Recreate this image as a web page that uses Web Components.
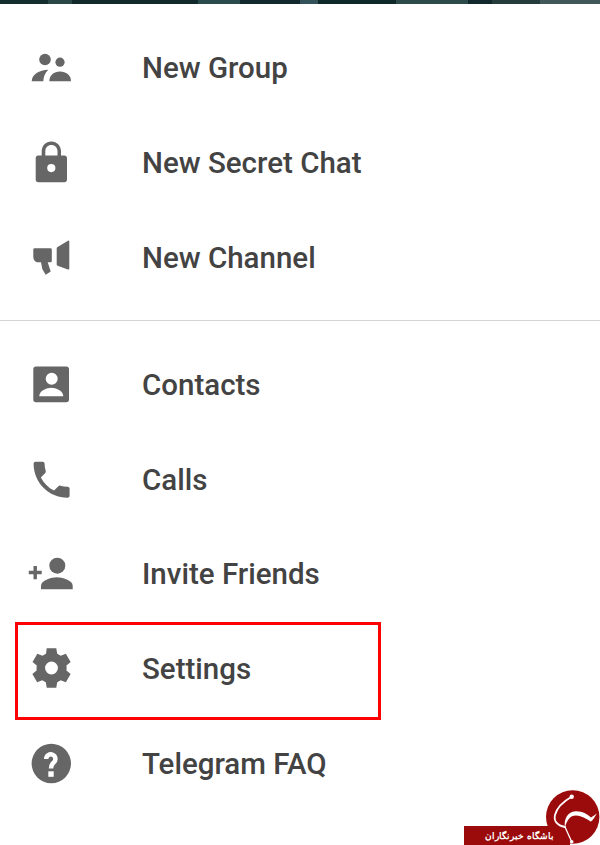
<!DOCTYPE html>
<html><head><meta charset="utf-8"><style>
html,body{margin:0;padding:0;background:#fff}
body{width:600px;height:845px;overflow:hidden;font-family:Roboto,"Liberation Sans",sans-serif}
</style></head><body>
<drawer-app></drawer-app>
<script>
const ICONS={
group:'<circle cx="18" cy="15.500" r="5.800"/><circle cx="33" cy="18.200" r="4.600"/><path d="M4.700 37.200C5 30.500 12 26 21.300 25.800 18 29 16.500 33 16.300 37.200z"/><path d="M22.300 37.200C22.500 31 27 27.500 33 27.500S44 31 44 37.200z"/>',
lock:'<path fill-rule="evenodd" d="M14.700 16.500V12.300C14.700 6.900 18.700 2.500 24.300 2.500S34 6.900 34 12.300v4.200h3.500c1.400 0 2.500 1.100 2.500 2.500v21.700c0 1.400-1.100 2.500-2.500 2.500H11.200c-1.400 0-2.500-1.100-2.500-2.500V19c0-1.400 1.100-2.500 2.500-2.500zm3.600 0h12.200V12.300c0-3.600-2.600-6.200-6.100-6.200s-6.100 2.600-6.100 6.200zM24.300 25a4.100 4.100 0 1 0 0 8.200 4.100 4.100 0 0 0 0-8.200z"/>',
channel:'<path d="M7.500 14.200H23.500a1.300 1.300 0 0 1 1.300 1.300V27a1.300 1.300 0 0 1-1.300 1.300h-2.800l3 9.200-5 3.300-3.400-5.800-1.300-6.700H11C8 28.300 6.300 25.500 6.300 22.500V15.400a1.200 1.200 0 0 1 1.200-1.200z"/><path d="M29.700 14.500c0-.7.300-1.200.9-1.500L41 6.700c.6-.3 1.300 0 1.300.8v27c0 .8-.7 1.200-1.300 1L30.600 31.800c-.6-.2-.9-.7-.9-1.300z"/>',
contact:'<path fill-rule="evenodd" d="M8.800 5.500h30.700c1.400 0 2.500 1.100 2.500 2.500v30.700c0 1.400-1.100 2.500-2.500 2.500H8.800c-1.400 0-2.500-1.100-2.500-2.500V8c0-1.400 1.100-2.500 2.500-2.500zm15.900 6.300a6 6 0 1 0 0 12 6 6 0 0 0 0-12zM12.300 35.200h24c0-5.500-7.500-8.400-12-8.400s-12 2.900-12 8.400z"/>',
call:'<path transform="translate(.6 -.2) scale(2)" d="M6.620 10.790c1.440 2.830 3.760 5.140 6.590 6.590l2.200-2.200c.27-.27.67-.36 1.020-.24 1.120.37 2.330.57 3.570.57.550 0 1 .45 1 1V20c0 .55-.45 1-1 1-9.390 0-17-7.610-17-17 0-.55.45-1 1-1h3.500c.55 0 1 .45 1 1 0 1.250.2 2.450.57 3.570.11.350.03.740-.25 1.020l-2.200 2.200z"/>',
invite:'<circle cx="30.300" cy="15.700" r="8"/><path d="M14 39.300v-3.500c0-5.500 10.500-8.500 15.800-8.500s15.900 3 15.900 8.500v3.500z"/><path d="M6.500 16h3.400v4.800h4.800v3.400H9.900v5H6.500v-5H1.800v-3.400h4.700z"/>',
settings:'<path transform="translate(24.500 23) scale(1.840) translate(-12 -12)" fill-rule="evenodd" d="M9.400 1.300h5.200l.5 3c.7.3 1.300.7 1.900 1.100l2.800-1.100 2.600 4.500-2.300 1.900c.1.400.1.800.1 1.300s0 .9-.1 1.300l2.300 1.900-2.600 4.500-2.800-1.100c-.6.400-1.200.8-1.900 1.100l-.5 3H9.400l-.5-3c-.7-.3-1.300-.7-1.900-1.100l-2.800 1.100-2.600-4.500 2.300-1.900C3.900 13 3.900 12.500 3.900 12s0-.9.100-1.300L1.700 8.800l2.600-4.500L7.100 5.400c.6-.4 1.200-.8 1.900-1.100zM12 8.500a3.500 3.500 0 1 0 0 7 3.500 3.500 0 0 0 0-7z"/>',
faq:'<circle cx="24.300" cy="23.500" r="19.700"/><path d="M19.200 19a4.600 4.600 0 1 1 7.600 3.400c-1.800 1.600-2.800 2.700-2.800 6.200" fill="none" stroke="#fff" stroke-width="4.500"/><rect x="21.300" y="31.300" width="5.400" height="5.500" fill="#fff"/>'
};
class MenuIcon extends HTMLElement{
  connectedCallback(){
    this.attachShadow({mode:'open'}).innerHTML=`<style>:host{display:block;width:48px;height:48px;flex:none}svg{display:block;fill:#666;overflow:visible}</style><svg width="48" height="48" viewBox="0 0 48 48">${ICONS[this.getAttribute('name')]}</svg>`;
  }
}
customElements.define('menu-icon',MenuIcon);
class MenuRow extends HTMLElement{
  connectedCallback(){
    this.attachShadow({mode:'open'}).innerHTML=`<style>:host{display:flex;align-items:center;height:var(--row,95px);padding-left:27px;box-sizing:border-box;color:#434343;font:500 29.5px Roboto,"Liberation Sans",sans-serif}
    .t{margin-left:67px;white-space:nowrap}</style><menu-icon name="${this.getAttribute('icon')}"></menu-icon><span class="t"><slot></slot></span>`;
  }
}
customElements.define('menu-row',MenuRow);
class BrandLogo extends HTMLElement{
  connectedCallback(){
    this.attachShadow({mode:'open'}).innerHTML=`<style>:host{position:absolute;left:464px;top:790px;width:136px;height:55px;display:block}
    .bar{position:absolute;left:0;top:36px;width:106px;height:19px;background:#9c0b0b;color:#fff;font:700 9px "Liberation Sans","Noto Sans",sans-serif;display:flex;align-items:center;justify-content:center;box-sizing:border-box;padding-left:5px}
    svg{position:absolute;left:81px;top:0}</style><div class="bar" dir="rtl">باشگاه خبرنگاران</div>
    <svg width="55" height="55" viewBox="0 0 55 55"><circle cx="27.700" cy="27" r="26.700" fill="#9c0b0b"/><g fill="none" stroke="#fff" stroke-linecap="round"><path d="M26.700 6.700C19 11 12 17 10 25 8.500 31 12 35.500 20 37" stroke-width="1.800"/><path d="M20 37L26.700 51.700" stroke-width="1.300"/></g><path d="M20 37.500C18.500 29 23 21.500 30.500 21.300 37 21 42 24 46 27.500L52 23.500C49 28 47.500 31 45.500 31.500 42 29 37 26 31 25.500 25 25.500 22 30 20 37.500z" fill="#fff"/><circle cx="26.700" cy="6.700" r="2.200" fill="#fff"/><circle cx="26.700" cy="51.700" r="1.800" fill="#fff"/></svg>`;
  }
}
customElements.define('brand-logo',BrandLogo);
class DrawerApp extends HTMLElement{
  connectedCallback(){
    this.attachShadow({mode:'open'}).innerHTML=`<style>:host{display:block;position:relative;width:600px;height:845px;overflow:hidden;background:#fff}
    .top{height:4px;background:linear-gradient(90deg,#122e2f 0 8%,#2a4748 8% 12%,#11292b 12% 33%,#2a4a4c 33% 40%,#11292c 40% 50%,#33525a 50% 53%,#0f292b 53% 66%,#2d4a4a 66% 78%,#11292c 78% 82%,#243c3c 82% 90%,#41585a 90% 100%)}
    .sec{padding-top:16px}
    .sec2{--row:94.750px;padding-top:16.500px}
    hr{margin:15px 0 0;border:0;height:1px;background:#d5d5d5}
    .mark{position:absolute;left:15px;top:622px;width:366px;height:98px;box-sizing:border-box;border:3px solid #f00}
    </style>
    <div class="top"></div>
    <div class="sec">
      <menu-row icon="group">New Group</menu-row>
      <menu-row icon="lock">New Secret Chat</menu-row>
      <menu-row icon="channel">New Channel</menu-row>
    </div>
    <hr>
    <div class="sec2">
      <menu-row icon="contact">Contacts</menu-row>
      <menu-row icon="call">Calls</menu-row>
      <menu-row icon="invite">Invite Friends</menu-row>
      <menu-row icon="settings">Settings</menu-row>
      <menu-row icon="faq">Telegram FAQ</menu-row>
    </div>
    <div class="mark"></div>
    <brand-logo></brand-logo>`;
  }
}
customElements.define('drawer-app',DrawerApp);
</script></body></html>
